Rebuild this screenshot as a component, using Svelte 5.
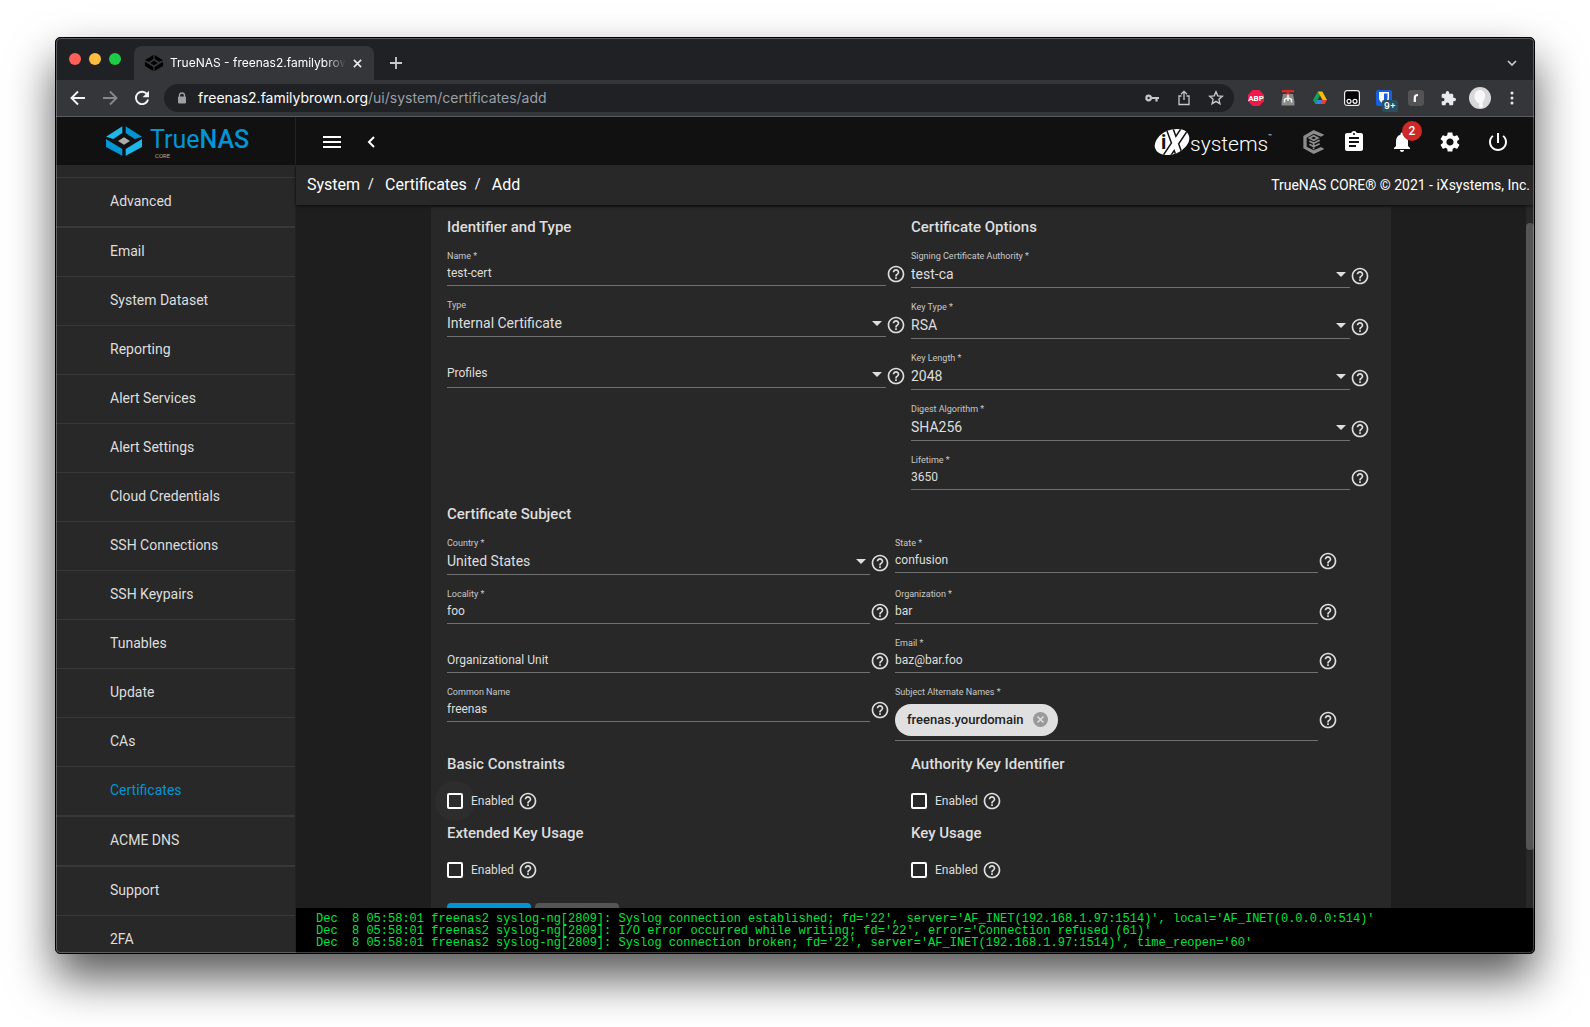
<script>
  const sidebar = [
    { label: 'Advanced' },
    { label: 'Email', thick: true },
    { label: 'System Dataset' },
    { label: 'Reporting' },
    { label: 'Alert Services' },
    { label: 'Alert Settings' },
    { label: 'Cloud Credentials' },
    { label: 'SSH Connections' },
    { label: 'SSH Keypairs' },
    { label: 'Tunables' },
    { label: 'Update' },
    { label: 'CAs' },
    { label: 'Certificates', active: true },
    { label: 'ACME DNS', thick: true },
    { label: 'Support', thick: true },
    { label: '2FA' },
  ];

  const identifier = [
    { id: 'name', label: 'Name *', value: 'test-cert' },
    { id: 'type', label: 'Type', value: 'Internal Certificate', select: true },
    { id: 'profiles', label: '', hint: 'Profiles', select: true },
  ];

  const options = [
    { id: 'ca', label: 'Signing Certificate Authority *', value: 'test-ca', select: true },
    { id: 'keytype', label: 'Key Type *', value: 'RSA', select: true },
    { id: 'keylength', label: 'Key Length *', value: '2048', select: true },
    { id: 'digest', label: 'Digest Algorithm *', value: 'SHA256', select: true },
    { id: 'lifetime', label: 'Lifetime *', value: '3650' },
  ];

  const subject = [
    { id: 'country', label: 'Country *', value: 'United States', select: true },
    { id: 'state', label: 'State *', value: 'confusion' },
    { id: 'locality', label: 'Locality *', value: 'foo' },
    { id: 'organization', label: 'Organization *', value: 'bar' },
    { id: 'unit', label: '', hint: 'Organizational Unit' },
    { id: 'email', label: 'Email *', value: 'baz@bar.foo' },
    { id: 'common', label: 'Common Name', value: 'freenas' },
    { id: 'san', label: 'Subject Alternate Names *', chips: ['freenas.yourdomain'] },
  ];

  const toggles = [
    { id: 'basic', title: 'Basic Constraints', focused: true },
    { id: 'authority', title: 'Authority Key Identifier' },
    { id: 'extended', title: 'Extended Key Usage' },
    { id: 'usage', title: 'Key Usage' },
  ];

  const log = `Dec  8 05:58:01 freenas2 syslog-ng[2809]: Syslog connection established; fd='22', server='AF_INET(192.168.1.97:1514)', local='AF_INET(0.0.0.0:514)'
Dec  8 05:58:01 freenas2 syslog-ng[2809]: I/O error occurred while writing; fd='22', error='Connection refused (61)'
Dec  8 05:58:01 freenas2 syslog-ng[2809]: Syslog connection broken; fd='22', server='AF_INET(192.168.1.97:1514)', time_reopen='60'`;
</script>

{#snippet help()}
  <button class="help" type="button" aria-label="Help">
    <svg viewBox="0 0 24 24" width="20" height="20"><path fill="currentColor" d="M11 18h2v-2h-2v2zm1-16C6.48 2 2 6.48 2 12s4.48 10 10 10 10-4.48 10-10S17.52 2 12 2zm0 18c-4.41 0-8-3.59-8-8s3.59-8 8-8 8 3.59 8 8-3.59 8-8 8zm0-14c-2.21 0-4 1.79-4 4h2c0-1.1.9-2 2-2s2 .9 2 2c0 2-3 1.75-3 5h2c0-2.25 3-2.5 3-5 0-2.21-1.79-4-4-4z" /></svg>
  </button>
{/snippet}

{#snippet field(f)}
  <div class="field">
    <div class="body">
      <label for={f.id}>{f.label}</label>
      {#if f.select}
        <div class="control pick">
          <select id={f.id} class:hint={f.hint} aria-label={f.hint}><option>{f.value ?? f.hint}</option></select>
          <svg class="arrow" viewBox="0 0 10 5" width="10" height="5"><path fill="currentColor" d="M0 0h10L5 5z" /></svg>
        </div>
      {:else if f.chips}
        <div class="control chips">
          {#each f.chips as chip}
            <span class="chip">{chip}
              <button type="button" aria-label="Remove">
                <svg viewBox="0 0 16 16" width="15" height="15"><circle cx="8" cy="8" r="8" fill="#999" /><path d="M4.8 4.8l6.4 6.4M11.2 4.8l-6.4 6.4" stroke="#e0e0e0" stroke-width="1.6" /></svg>
              </button>
            </span>
          {/each}
          <input id={f.id} type="text" />
        </div>
      {:else}
        <div class="control"><input id={f.id} type="text" value={f.value ?? ''} placeholder={f.hint} /></div>
      {/if}
    </div>
    <div class="aid" class:tall={f.chips}>{@render help()}</div>
  </div>
{/snippet}

<div class="desktop">
  <div class="window">
    <div class="tabs">
      <div class="lights"><i class="red"></i><i class="amber"></i><i class="green"></i></div>
      <div class="tab">
        <svg viewBox="0 0 108 96" width="18" height="16" fill="#000"><path d="M50 0v24L24 40 0 32zM58 0v24l26 16 24-8zM0 40l50 32v24L0 66zM108 40L58 72v24l50-30zM54 34l22 14-22 14-22-14z" /></svg>
        <span class="title">TrueNAS - freenas2.familybrown</span>
        <button class="x" aria-label="Close tab"><svg viewBox="0 0 10 10" width="9" height="9"><path d="M1 1l8 8M9 1L1 9" stroke="#e8eaed" stroke-width="1.8" /></svg></button>
      </div>
      <button class="plus" aria-label="New tab"><svg viewBox="0 0 12 12" width="12" height="12"><path d="M6 0v12M0 6h12" stroke="#c8cacd" stroke-width="1.8" /></svg></button>
      <button class="more" aria-label="Search tabs"><svg viewBox="0 0 10 6" width="10" height="6"><path d="M1 1l4 4 4-4" fill="none" stroke="#c8cacd" stroke-width="1.7" /></svg></button>
    </div>

    <div class="toolbar">
      <button aria-label="Back"><svg viewBox="0 0 16 16" width="16" height="16"><path d="M8 1.500L1.500 8 8 14.500M2 8h13" fill="none" stroke="#f1f3f4" stroke-width="1.900" /></svg></button>
      <button aria-label="Forward"><svg viewBox="0 0 16 16" width="16" height="16"><path d="M8 1.500L14.500 8 8 14.500M14 8H1" fill="none" stroke="#86888c" stroke-width="1.900" /></svg></button>
      <button aria-label="Reload"><svg viewBox="0 0 16 16" width="16" height="16"><path d="M13.300 4.500A6.200 6.200 0 1 0 14.100 9.500" fill="none" stroke="#f1f3f4" stroke-width="1.900" /><path d="M15 .8v6.400H8.600z" fill="#f1f3f4" /></svg></button>
      <div class="omnibox">
        <svg viewBox="0 0 10 12" width="10" height="12"><path d="M2.500 5V3.500a2.500 2.500 0 0 1 5 0V5" fill="none" stroke="#9aa0a6" stroke-width="1.300" /><rect x="1" y="4.500" width="8" height="7" rx="1" fill="#9aa0a6" /></svg>
        <span class="url"><b>freenas2.familybrown.org</b>/ui/system/certificates/add</span>
        <button aria-label="Passwords"><svg viewBox="0 0 16 16" width="16" height="16"><path fill="none" stroke="#c4c7cb" stroke-width="2.200" d="M7 8A2.300 2.300 0 1 1 2.400 8a2.300 2.300 0 0 1 4.600 0zM7 8h8M12.500 8v3.500" /></svg></button>
        <button aria-label="Share"><svg viewBox="0 0 16 16" width="16" height="16"><path fill="none" stroke="#c4c7cb" stroke-width="1.300" d="M5.500 6H3v8.500h10V6h-2.500M8 10V1.500M5 4.300l3-3 3 3" /></svg></button>
        <button aria-label="Bookmark"><svg viewBox="0 0 16 16" width="16" height="16"><path fill="none" stroke="#c4c7cb" stroke-width="1.400" d="M8 1.800l1.800 4.100 4.500.4-3.400 3 1 4.400L8 11.300l-3.900 2.400 1-4.400-3.400-3 4.500-.4z" /></svg></button>
      </div>
      <button aria-label="Adblock Plus"><svg class="abp" viewBox="0 0 16 16" width="16" height="16"><path fill="#f1194a" d="M4.700 0h6.600L16 4.700v6.600L11.300 16H4.700L0 11.300V4.700z" /><text x="8" y="11" text-anchor="middle">ABP</text></svg></button>
      <button aria-label="Downloads"><svg viewBox="0 0 16 16" width="16" height="16"><path fill="#888b88" d="M3 4h10l1.500 8v3.500h-13V12z" /><path d="M8 4v7M4.500 12.500V9.500l3.500-2 3.500 2v3" fill="none" stroke="#f0f2f0" stroke-width="1.500" /><path fill="#d62a2a" d="M2 0h12v2.200H2zM6.500 2h3v2.500h-3z" /></svg></button>
      <button aria-label="Drive"><svg viewBox="0 0 16 16" width="16" height="16"><path fill="#12a15c" d="M5.800 1.500L1 10l2.300 4L8 5.500z" /><path fill="#fbbc05" d="M5.800 1.500h4.500L15 10h-4.500z" /><path fill="#3d7ff0" d="M5.500 10h5.300L8.500 14H3.300z" /><path fill="#ea4335" d="M10.500 10H15l-2.300 4H8.200z" /></svg></button>
      <button aria-label="Tampermonkey"><svg viewBox="0 0 16 16" width="16" height="16"><rect x=".6" y=".6" width="14.800" height="14.800" rx="2.500" fill="#000" stroke="#eee" stroke-width="1.200" /><g fill="#000" stroke="#fff" stroke-width="1.200"><circle cx="5" cy="11.300" r="2" /><circle cx="11" cy="11.300" r="2" /></g></svg></button>
      <button class="vault" aria-label="Bitwarden"><svg viewBox="0 0 16 16" width="16" height="16"><rect width="16" height="16" rx="2" fill="#1660de" /><path fill="#fff" d="M3 2h10v6c0 3-2 4.500-5 6-3-1.500-5-3-5-6z" /><path fill="#1660de" d="M8 3.500h3.500V8c0 2-1.300 3-3.500 4z" /></svg><span>9+</span></button>
      <button aria-label="Reader"><svg viewBox="0 0 16 16" width="16" height="16"><rect width="16" height="16" rx="3" fill="#545454" /><path d="M6.800 12V7.500Q6.800 5 10 5" fill="none" stroke="#fff" stroke-width="2.200" /></svg></button>
      <button aria-label="Extensions"><svg viewBox="1 1 22 22" width="15" height="15"><path fill="#e8eaed" d="M20.500 11H19V7c0-1.100-.9-2-2-2h-4V3.500a2.500 2.500 0 0 0-5 0V5H4c-1.100 0-2 .9-2 2v3.800h1.500a2.700 2.700 0 0 1 0 5.400H2V20c0 1.100.9 2 2 2h3.800v-1.500a2.700 2.700 0 0 1 5.400 0V22H17c1.100 0 2-.9 2-2v-4h1.500a2.500 2.500 0 0 0 0-5z" /></svg></button>
      <button aria-label="Profile"><svg viewBox="0 0 22 22" width="22" height="22"><circle cx="11" cy="11" r="11" fill="#d8d8d8" /><path fill="#f8f8f8" d="M11 3c3.500 0 5.500 3 5 7-.3 2.600-1.500 4.500-2.500 5.500l.5 4.500q-2 1.500-4 0l.3-3.500C6.500 14.500 5.500 12 5.500 9.500 5.500 5.500 7.500 3 11 3z" /></svg></button>
      <button aria-label="Menu"><svg viewBox="0 0 4 14" width="4" height="14" fill="#e8eaed"><circle cx="2" cy="2" r="1.500" /><circle cx="2" cy="7" r="1.500" /><circle cx="2" cy="12" r="1.500" /></svg></button>
    </div>

    <div class="app">
      <aside>
        <a class="brand" href="#home" aria-label="TrueNAS CORE">
          <svg viewBox="0 0 108 88" width="36" height="30">
            <path fill="#1fb6ea" d="M49 0v20L22 38 0 31z" />
            <path fill="#0095d5" d="M59 0v20l27 18 22-7z" />
            <path fill="#0095d5" d="M0 38l49 30v20L0 62z" />
            <path fill="#1fb6ea" d="M108 38L59 68v20l49-26z" />
            <path fill="#aeadae" d="M54 33l18 11-18 11-18-11z" />
          </svg>
          <span class="word">
            <span class="name">True<b>NAS</b></span>
            <small>CORE</small>
          </span>
        </a>
        <nav>
          <ul>
            {#each sidebar as item}
              <li class:thick={item.thick}><a href="#{item.label}" class:active={item.active}>{item.label}</a></li>
            {/each}
          </ul>
        </nav>
      </aside>

      <main>
        <header>
          <button class="burger" aria-label="Toggle menu"><svg viewBox="0 0 18 12" width="18" height="12"><path d="M0 1h18M0 6h18M0 11h18" stroke="#fff" stroke-width="2" /></svg></button>
          <button class="back" aria-label="Collapse"><svg viewBox="0 0 8 12" width="8" height="12"><path d="M7 1L2 6l5 5" fill="none" stroke="#fff" stroke-width="2" /></svg></button>
          <span class="ix">
            <svg viewBox="0 0 36 28" width="36" height="28">
              <defs><clipPath id="oval"><ellipse cx="18" cy="14" rx="18" ry="12" transform="rotate(-22 18 14)" /></clipPath></defs>
              <g clip-path="url(#oval)">
                <path fill="#fff" d="M0 0h36v28H0z" />
                <path d="M15 -1l11 30M32 -1L12 29" stroke="#111" stroke-width="8" />
                <path d="M15 -1l11 30M32 -1L12 29" stroke="#fff" stroke-width="5" />
              </g>
              <text x="7" y="21">i</text>
            </svg>
            <span class="systems">systems</span><sup>™</sup>
          </span>
          <button class="icon narrow" aria-label="TrueCommand"><svg viewBox="0 0 64 72" width="22" height="24"><path fill="#8c8c8c" d="M63 14L31 0 0 18v37l31 17 32-15-10-6-22 10-21-11V23l21-12 22 9z" /><path d="M31 17l13 7-13 7-13-7zM18 33l13 7 18-9M18 43l13 7 18-9M31 36v22" fill="none" stroke="#8c8c8c" stroke-width="5" /></svg></button>
          <button class="icon" aria-label="Tasks"><svg viewBox="0 0 24 24" width="24" height="24"><path fill="#fff" d="M19 3h-4.180C14.400 1.840 13.300 1 12 1c-1.300 0-2.400.84-2.820 2H5c-1.100 0-2 .9-2 2v14c0 1.100.9 2 2 2h14c1.100 0 2-.9 2-2V5c0-1.100-.9-2-2-2zm-7 0c.55 0 1 .45 1 1s-.45 1-1 1-1-.45-1-1 .45-1 1-1zm2 14H7v-2h7v2zm3-4H7v-2h10v2zm0-4H7V7h10v2z" /></svg></button>
          <button class="icon bell" aria-label="Alerts"><svg viewBox="0 0 24 24" width="24" height="24"><path fill="#fff" d="M12 22c1.100 0 2-.9 2-2h-4c0 1.100.89 2 2 2zm6-6v-5c0-3.070-1.640-5.640-4.500-6.320V4c0-.83-.67-1.500-1.500-1.500s-1.500.67-1.500 1.500v.68C7.630 5.360 6 7.920 6 11v5l-2 2v1h16v-1l-2-2z" /></svg><span>2</span></button>
          <button class="icon" aria-label="Settings"><svg viewBox="0 0 24 24" width="24" height="24"><path fill="#fff" d="M19.140 12.940c.04-.3.06-.61.06-.94 0-.32-.02-.64-.07-.94l2.030-1.580c.18-.14.23-.41.12-.61l-1.920-3.320c-.12-.22-.37-.29-.59-.22l-2.390.96c-.5-.38-1.030-.7-1.620-.94l-.36-2.540c-.04-.24-.24-.41-.48-.41h-3.840c-.24 0-.43.17-.47.41l-.36 2.540c-.59.24-1.130.57-1.620.94l-2.390-.96c-.22-.08-.47 0-.59.22L2.740 8.870c-.12.21-.08.47.12.61l2.030 1.580c-.05.3-.09.63-.09.94s.02.64.07.94l-2.030 1.580c-.18.14-.23.41-.12.61l1.920 3.320c.12.22.37.29.59.22l2.390-.96c.5.38 1.030.7 1.620.94l.36 2.540c.05.24.24.41.48.41h3.840c.24 0 .44-.17.47-.41l.36-2.540c.59-.24 1.130-.56 1.620-.94l2.390.96c.22.08.47 0 .59-.22l1.920-3.320c.12-.22.07-.47-.12-.61l-2.010-1.580zM12 15.600c-1.980 0-3.600-1.620-3.600-3.600s1.620-3.600 3.600-3.600 3.600 1.620 3.600 3.600-1.620 3.600-3.600 3.600z" /></svg></button>
          <button class="icon" aria-label="Power"><svg viewBox="0 0 24 24" width="24" height="24"><path fill="#fff" d="M13 3h-2v10h2V3zm4.830 2.170l-1.420 1.420C17.990 7.860 19 9.810 19 12c0 3.870-3.130 7-7 7s-7-3.130-7-7c0-2.190 1.010-4.140 2.580-5.420L6.170 5.170C4.230 6.820 3 9.260 3 12c0 4.970 4.030 9 9 9s9-4.030 9-9c0-2.740-1.230-5.180-3.170-6.830z" /></svg></button>
        </header>

        <div class="crumbs">
          <div class="trail"><a href="#system">System</a><i>/</i><a href="#certificates">Certificates</a><i>/</i><span>Add</span></div>
          <p>TrueNAS CORE® © 2021 - iXsystems, Inc.</p>
        </div>

        <div class="view">
          <form class="card">
            <div class="pair">
              <section><h2>Identifier and Type</h2>{#each identifier as f}{@render field(f)}{/each}</section>
              <section><h2>Certificate Options</h2>{#each options as f}{@render field(f)}{/each}</section>
            </div>
            <section class="subject">
              <h2>Certificate Subject</h2>
              <div class="grid">{#each subject as f}{@render field(f)}{/each}</div>
            </section>
            <div class="toggles">
              {#each toggles as t}
                <section>
                  <h2>{t.title}</h2>
                  <div class="check">
                    <input type="checkbox" id={t.id} class:focused={t.focused} />
                    <label for={t.id}>Enabled</label>
                    {@render help()}
                  </div>
                </section>
              {/each}
            </div>
            <div class="actions">
              <button class="primary" type="button" aria-label="Submit"></button>
              <button type="button" aria-label="Cancel"></button>
            </div>
          </form>
          <div class="track"><div class="thumb"></div></div>
        </div>

        <pre>{log}</pre>
      </main>
    </div>
  </div>
</div>

<style>
  :global(body) { margin: 0; background: #fff; }
  * { box-sizing: border-box; }
  button { padding: 0; border: 0; background: none; color: inherit; font: inherit; display: flex; align-items: center; justify-content: center; }
  svg { display: block; flex: none; }

  .desktop { height: 100vh; padding: 37px 55px 73px; font-family: Roboto, "Liberation Sans", sans-serif; color: #dedede; overflow: hidden; }
  .window { height: 100%; display: flex; flex-direction: column; border: 1px solid #000; border-radius: 5px; background: #202124; overflow: hidden; position: relative; box-shadow: 0 24px 46px rgba(0, 0, 0, .66); }
  .window::after { content: ""; position: absolute; inset: 0; border: 1px solid rgba(255, 255, 255, .26); border-radius: 4px; pointer-events: none; }

  .tabs { flex: none; height: 42px; display: flex; align-items: flex-end; font-family: Inter, sans-serif; }
  .lights { width: 78px; height: 42px; display: flex; align-items: center; gap: 8px; padding-left: 13px; }
  .lights i { width: 12px; height: 12px; border-radius: 50%; }
  .red { background: #ff5f57; }
  .amber { background: #febc40; }
  .green { background: #1ecb47; }
  .tab { width: 240px; height: 34px; display: flex; align-items: center; padding: 0 12px 0 11px; background: #35363a; border-radius: 8px 8px 0 0; }
  .title { flex: 1; margin: 0 7px; padding-bottom: 2px; overflow: hidden; white-space: nowrap; font-size: 12px; font-weight: 400; color: #fff; mask-image: linear-gradient(90deg, #000 88%, transparent); }
  .plus { width: 44px; height: 34px; }
  .more { margin-left: auto; width: 44px; height: 34px; }

  .toolbar { flex: none; height: 37px; display: flex; align-items: center; padding: 0 6px; background: #35363a; border-bottom: 1px solid #5a5b5f; font-family: Inter, sans-serif; }
  .toolbar button { width: 32px; height: 32px; flex: none; }
  .omnibox { flex: 1; min-width: 0; height: 28px; margin: 0 6px; display: flex; align-items: center; padding: 0 2px 0 13px; border-radius: 14px; background: #202124; }
  .url { flex: 1; margin-left: 11px; padding-bottom: 2px; font-size: 14px; color: #9aa0a6; white-space: nowrap; }
  .url b { font-weight: 400; color: #fff; }
  .abp text { font: 700 8px Roboto, sans-serif; fill: #fff; }
  .vault { position: relative; }
  .vault span { position: absolute; left: 14px; top: 18px; width: 16px; height: 12px; border-radius: 2px; background: #2a4f60; color: #fff; font-size: 9px; line-height: 12px; font-weight: 600; text-align: center; }

  .app { flex: 1; min-height: 0; display: flex; background: #1e1e1e; }
  aside { flex: none; width: 240px; display: flex; flex-direction: column; background: #282828; border-right: 1px solid #222; overflow: hidden; }
  .brand { flex: none; height: 48px; display: flex; align-items: center; gap: 8px; padding-left: 50px; background: #111; text-decoration: none; }
  .word { display: flex; flex-direction: column; padding-top: 4px; }
  .name { font-size: 25px; line-height: 26px; color: #0095d5; }
  .name b { font-weight: 500; }
  small { margin-left: 5px; font-size: 6px; line-height: 6px; color: #aeadae; }
  nav { overflow: hidden; }
  ul { list-style: none; margin: 0; padding: 12px 0 0; }
  li { border-top: 1px solid #383838; }
  li.thick { border-top-width: 2px; }
  li a { display: block; padding: 0 0 2px 54px; line-height: 46px; font-size: 14px; color: #dedede; text-decoration: none; }
  li a.active { color: #0095d5; }

  main { flex: 1; min-width: 0; display: flex; flex-direction: column; }
  header { flex: none; height: 48px; display: flex; align-items: center; padding: 2px 12px 0 27px; background: #111; }
  .back { margin-left: 26px; }
  .ix { margin-left: auto; margin-right: 26px; display: flex; align-items: center; color: #fff; }
  .ix text { font: 700 20px Roboto, sans-serif; fill: #111; }
  .systems { padding-top: 4px; font-size: 21px; line-height: 28px; font-weight: 300; }
  sup { font-size: 6px; align-self: flex-start; line-height: 20px; }
  .icon { width: 48px; height: 46px; }
  .narrow { width: 32px; }
  .bell { position: relative; }
  .bell span { position: absolute; left: 24px; top: 2px; width: 20px; height: 20px; border-radius: 50%; background: #ce2929; font-size: 12px; line-height: 20px; font-weight: 500; text-align: center; color: #fff; }

  .crumbs { flex: none; height: 40px; display: flex; align-items: center; justify-content: space-between; padding: 0 4px 0 11px; background: #282828; box-shadow: 0 1px 3px rgba(0, 0, 0, .6); position: relative; font-size: 16px; color: #fff; }
  .trail { display: flex; align-items: center; padding-bottom: 2px; }
  .crumbs a { color: inherit; text-decoration: none; }
  .crumbs i { width: 25px; padding-left: 8px; font-style: normal; font-size: 14px; }
  .crumbs p { margin: 0; font-size: 14px; }

  .view { flex: 1; min-height: 0; display: flex; padding-top: 2px; overflow: hidden; }
  .card { flex: 1; max-width: 960px; margin: 0 auto; padding: 11px 16px; background: #282828; align-self: flex-start; }
  .track { flex: none; width: 8px; margin-top: -2px; padding: 18px 0 58px; background: #282828; }
  .thumb { height: 100%; border-radius: 4px; background: #555; }

  h2 { margin: 0; font-size: 15px; line-height: 18px; font-weight: 500; }
  .pair, .toggles { display: grid; grid-template-columns: 1fr 1fr; }
  .pair h2, .subject h2 { padding-bottom: 1px; }
  .subject { padding: 15px 32px 0 0; }
  .grid { display: grid; grid-template-columns: 1fr 1fr; align-items: start; }
  .field { display: flex; align-items: flex-end; padding-top: 13px; padding-right: 5px; }
  .body { flex: 1; min-width: 0; }
  .body label { display: block; height: 12px; font-size: 9px; line-height: 12px; color: #c8c8c8; }
  .control { border-bottom: 1px solid #707070; display: grid; }
  .control input, .control select { width: 100%; height: 23px; margin: 0; padding: 0 0 1px; border: 0; outline: 0; background: none; color: #dedede; font: 12px Roboto, sans-serif; appearance: none; }
  .control select { height: 25px; font-size: 14px; }
  .control select.hint { font-size: 12px; padding-bottom: 3px; }
  input::placeholder { color: #dedede; opacity: 1; }
  .pick select, .pick .arrow { grid-area: 1 / 1; }
  .arrow { align-self: center; justify-self: end; margin-right: 4px; color: #dedede; pointer-events: none; }
  .control.chips { display: flex; align-items: center; gap: 8px; height: 43px; padding-top: 1px; }
  .chips input { flex: 1; width: auto; min-width: 0; }
  .chip { display: flex; align-items: center; gap: 10px; height: 32px; padding: 0 10px 0 12px; border-radius: 16px; background: #e0e0e0; color: #212121; font-size: 13px; font-weight: 500; white-space: nowrap; }
  .aid { padding-bottom: 2px; }
  .aid.tall { padding-bottom: 11px; }
  .help { color: #dedede; }

  .toggles { margin-top: 14px; row-gap: 13px; }
  .check { display: flex; align-items: center; margin-top: 18px; height: 20px; font-size: 12px; position: relative; isolation: isolate; }
  .check input { appearance: none; position: relative; width: 16px; height: 16px; margin: 0 8px 0 0; border: 2px solid #fff; border-radius: 2px; }
  .check input.focused::before { content: ""; position: absolute; inset: -14px; border-radius: 50%; background: #fff; opacity: .025; }
  .check .help { margin-left: 4px; }
  .actions { display: flex; gap: 4px; margin-top: 23px; }
  .actions button { width: 84px; height: 36px; border-radius: 4px; background: #555; }
  .actions .primary { background: #0095d5; }

  pre { flex: none; margin: 0; padding: 5px 20px 4px; background: #000; color: #00e639; font: 12px/12px "Liberation Mono", monospace; position: relative; overflow: hidden; }
</style>
